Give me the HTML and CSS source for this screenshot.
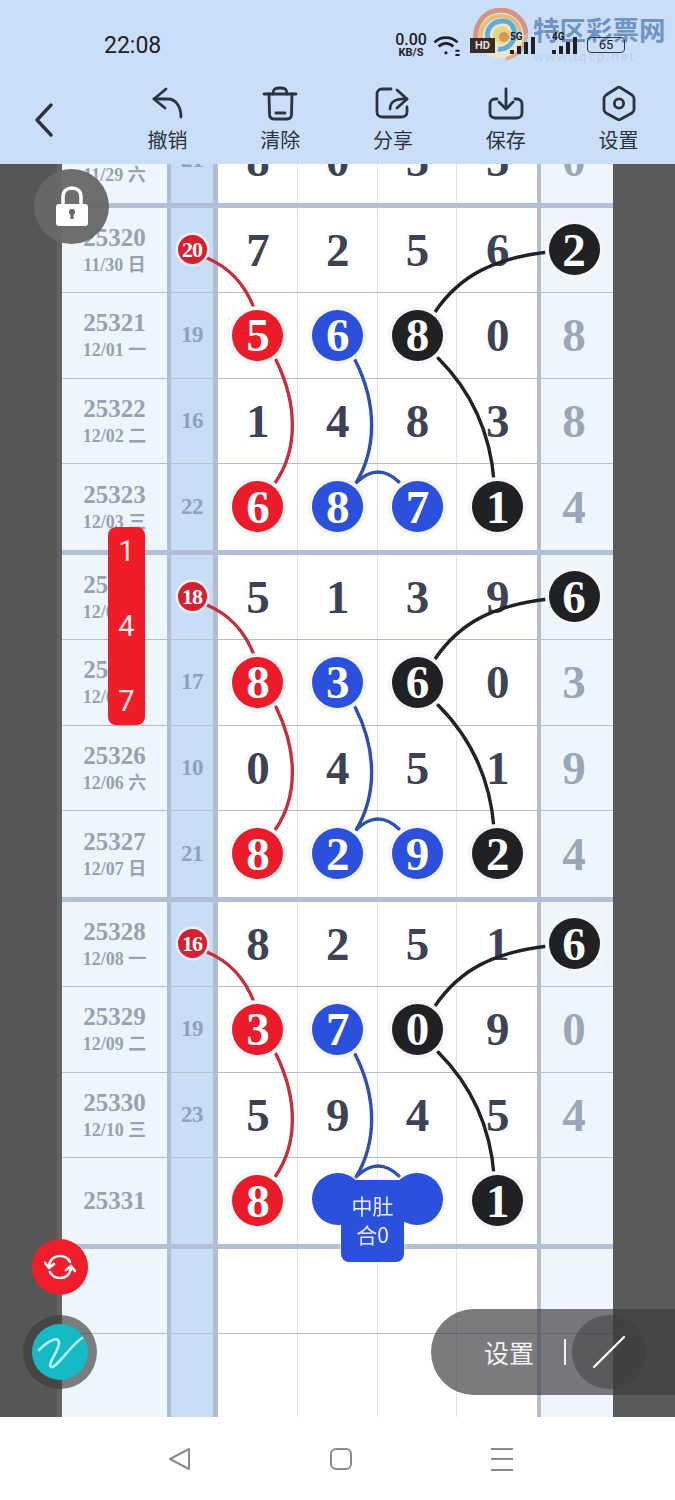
FILE: index.html

```html
<!DOCTYPE html>
<html lang="zh-CN">
<head>
    <meta charset="UTF-8">
    <meta name="viewport" content="width=device-width, initial-scale=1.0">
    <title>走势图</title>
    <link rel="stylesheet" href="styles.css">
</head>
<body>
    <header class="top">
        <div class="status-bar">
            <span class="time">22:08</span>
            <div class="status-icons">
                <div class="speed"><span>0.00</span><small>KB/S</small></div>
                <svg class="wifi" width="28" height="21" viewBox="0 0 26 20" fill="none" stroke="#1d2026" stroke-width="2.6">
                    <path d="M1 7 C7 1 17 1 23 7"/>
                    <path d="M5 11 C9 7 15 7 19 11"/>
                    <circle cx="12" cy="17" r="1.6" fill="#1d2026" stroke="none"/>
                    <path d="M21 15 h4 M21 19 h4" stroke-width="2"/>
                </svg>
                <span class="hd">HD</span>
                <div class="signal"><small>5G</small><i class="b1"></i><i class="b2"></i><i class="b3"></i><i class="b4"></i></div>
                <div class="signal"><small>4G</small><i class="b1"></i><i class="b2"></i><i class="b3"></i><i class="b4"></i></div>
                <span class="battery">65</span>
            </div>
        </div>
        <nav class="toolbar">
            <svg class="back" width="20" height="34" viewBox="0 0 20 34" fill="none" stroke="#2b3340" stroke-width="3.4" stroke-linecap="round" stroke-linejoin="round">
                <path d="M17 2 L3 17 L17 32"/>
            </svg>
            <div class="tool">
                <svg width="36" height="36" viewBox="0 0 36 36" fill="none" stroke="#2b3340" stroke-width="2.8" stroke-linecap="round" stroke-linejoin="round">
                    <path d="M17 3 L5 13 L16 22"/>
                    <path d="M5 13 H19 C27 13 32 21 32 31"/>
                </svg>
                <span>撤销</span>
            </div>
            <div class="tool">
                <svg width="36" height="36" viewBox="0 0 36 36" fill="none" stroke="#2b3340" stroke-width="2.8" stroke-linecap="round" stroke-linejoin="round">
                    <path d="M2 8 H34"/>
                    <path d="M11 8 C11 3 13 2 18 2 C23 2 25 3 25 8"/>
                    <path d="M7 8 L7.5 28 C7.5 31 9 33 12 33 H25 C28 33 29.5 31 29.5 28 L30 8"/>
                    <path d="M14 27 H23"/>
                </svg>
                <span>清除</span>
            </div>
            <div class="tool">
                <svg width="36" height="36" viewBox="0 0 36 36" fill="none" stroke="#2b3340" stroke-width="2.8" stroke-linecap="round" stroke-linejoin="round">
                    <path d="M16 3 H7 C4 3 2 5 2 8 V26 C2 29 4 31 7 31 H27 C30 31 32 29 32 26 V21"/>
                    <path d="M22 4 L32 13 L22 22"/>
                    <path d="M32 13 C22 12 15 15 15 23"/>
                </svg>
                <span>分享</span>
            </div>
            <div class="tool">
                <svg width="36" height="36" viewBox="0 0 36 36" fill="none" stroke="#2b3340" stroke-width="2.8" stroke-linecap="round" stroke-linejoin="round">
                    <path d="M9 13 H7 C4 13 2 15 2 18 V27 C2 30 4 32 7 32 H29 C32 32 34 30 34 27 V18 C34 15 32 13 29 13 H27"/>
                    <path d="M18 3 V22"/>
                    <path d="M11 16 L18 23 L25 16"/>
                </svg>
                <span>保存</span>
            </div>
            <div class="tool">
                <svg width="36" height="36" viewBox="0 0 36 36" fill="none" stroke="#2b3340" stroke-width="2.8" stroke-linecap="round" stroke-linejoin="round">
                    <path d="M16 2 C17 1 19 1 20 2 L31 9 C32 10 33 11 33 12 V24 C33 25 32 26 31 27 L20 33 C19 34 17 34 16 33 L5 27 C4 26 3 25 3 24 V12 C3 11 4 10 5 9 Z"/>
                    <circle cx="18" cy="17.5" r="4.6"/>
                </svg>
                <span>设置</span>
            </div>
        </nav>
    </header>

    <main class="board">
        <div class="gutter gutter-left"></div>
        <div class="sheet">
            <div class="row row-end">
                <div class="date"><b>25319</b><span>11/29 六</span></div>
                <div class="sum">21</div>
                <div class="cell">8</div><div class="cell">0</div><div class="cell">5</div><div class="cell">5</div>
                <div class="last">0</div>
            </div>

            <div class="row">
                <div class="date"><b>25320</b><span>11/30 日</span></div>
                <div class="sum"><span class="tag">20</span></div>
                <div class="cell">7</div><div class="cell">2</div><div class="cell">5</div><div class="cell">6</div>
                <div class="last"><span class="ball black">2</span></div>
            </div>
            <div class="row">
                <div class="date"><b>25321</b><span>12/01 一</span></div>
                <div class="sum">19</div>
                <div class="cell"><span class="ball red">5</span></div><div class="cell"><span class="ball blue">6</span></div><div class="cell"><span class="ball black">8</span></div><div class="cell">0</div>
                <div class="last">8</div>
            </div>
            <div class="row">
                <div class="date"><b>25322</b><span>12/02 二</span></div>
                <div class="sum">16</div>
                <div class="cell">1</div><div class="cell">4</div><div class="cell">8</div><div class="cell">3</div>
                <div class="last">8</div>
            </div>
            <div class="row row-end">
                <div class="date"><b>25323</b><span>12/03 三</span></div>
                <div class="sum">22</div>
                <div class="cell"><span class="ball red">6</span></div><div class="cell"><span class="ball blue">8</span></div><div class="cell"><span class="ball blue">7</span></div><div class="cell"><span class="ball black">1</span></div>
                <div class="last">4</div>
            </div>

            <div class="row">
                <div class="date"><b>25324</b><span>12/04 四</span></div>
                <div class="sum"><span class="tag">18</span></div>
                <div class="cell">5</div><div class="cell">1</div><div class="cell">3</div><div class="cell">9</div>
                <div class="last"><span class="ball black">6</span></div>
            </div>
            <div class="row">
                <div class="date"><b>25325</b><span>12/05 五</span></div>
                <div class="sum">17</div>
                <div class="cell"><span class="ball red">8</span></div><div class="cell"><span class="ball blue">3</span></div><div class="cell"><span class="ball black">6</span></div><div class="cell">0</div>
                <div class="last">3</div>
            </div>
            <div class="row">
                <div class="date"><b>25326</b><span>12/06 六</span></div>
                <div class="sum">10</div>
                <div class="cell">0</div><div class="cell">4</div><div class="cell">5</div><div class="cell">1</div>
                <div class="last">9</div>
            </div>
            <div class="row row-end">
                <div class="date"><b>25327</b><span>12/07 日</span></div>
                <div class="sum">21</div>
                <div class="cell"><span class="ball red">8</span></div><div class="cell"><span class="ball blue">2</span></div><div class="cell"><span class="ball blue">9</span></div><div class="cell"><span class="ball black">2</span></div>
                <div class="last">4</div>
            </div>

            <div class="row">
                <div class="date"><b>25328</b><span>12/08 一</span></div>
                <div class="sum"><span class="tag">16</span></div>
                <div class="cell">8</div><div class="cell">2</div><div class="cell">5</div><div class="cell">1</div>
                <div class="last"><span class="ball black">6</span></div>
            </div>
            <div class="row">
                <div class="date"><b>25329</b><span>12/09 二</span></div>
                <div class="sum">19</div>
                <div class="cell"><span class="ball red">3</span></div><div class="cell"><span class="ball blue">7</span></div><div class="cell"><span class="ball black">0</span></div><div class="cell">9</div>
                <div class="last">0</div>
            </div>
            <div class="row">
                <div class="date"><b>25330</b><span>12/10 三</span></div>
                <div class="sum">23</div>
                <div class="cell">5</div><div class="cell">9</div><div class="cell">4</div><div class="cell">5</div>
                <div class="last">4</div>
            </div>
            <div class="row row-end">
                <div class="date"><b>25331</b></div>
                <div class="sum"></div>
                <div class="cell"><span class="ball red">8</span></div><div class="cell"></div><div class="cell"></div><div class="cell"><span class="ball black">1</span></div>
                <div class="last"></div>
            </div>

            <div class="row">
                <div class="date"></div><div class="sum"></div>
                <div class="cell"></div><div class="cell"></div><div class="cell"></div><div class="cell"></div>
                <div class="last"></div>
            </div>
            <div class="row">
                <div class="date"></div><div class="sum"></div>
                <div class="cell"></div><div class="cell"></div><div class="cell"></div><div class="cell"></div>
                <div class="last"></div>
            </div>
        </div>
        <div class="gutter gutter-right"></div>

        <svg class="curves" width="675" height="1253" viewBox="0 164 675 1253" fill="none" stroke-width="3.4" stroke-linecap="round">
            <g id="trend">
                <path stroke="#c4303e" d="M207 258 Q240 272 254 308"/>
                <path stroke="#c4303e" d="M276 360 C298 405 298 450 275 483"/>
                <path stroke="#2f50b0" d="M355 360 C378 405 376 450 356 483"/>
                <path stroke="#2f50b0" d="M357 482 Q378 462 399 482"/>
                <path stroke="#1f2227" d="M548 252 C495 258 460 275 435 312"/>
                <path stroke="#1f2227" d="M438 358 C470 390 490 430 494 481"/>
            </g>
            <use href="#trend" y="347"/>
            <use href="#trend" y="694"/>
        </svg>

        <div class="blob">
            <i class="blob-dot"></i>
            <i class="blob-dot"></i>
            <i class="blob-bridge"></i>
            <div class="blob-tab">中肚<br>合0</div>
        </div>
    </main>

    <div class="lock">
        <svg width="34" height="42" viewBox="0 0 34 42">
            <path d="M8 19 V11 C8 5 12 2 17 2 C22 2 26 5 26 11 V19" fill="none" stroke="#fff" stroke-width="3.5"/>
            <rect x="1" y="18" width="32" height="22" rx="3" fill="#fff"/>
            <circle cx="17" cy="26" r="3" fill="#666"/>
            <rect x="15.5" y="27" width="3" height="6" fill="#666"/>
        </svg>
    </div>

    <div class="quick-pick">
        <span>1</span>
        <span>4</span>
        <span>7</span>
    </div>

    <div class="refresh">
        <svg width="32" height="32" viewBox="0 0 32 32" fill="none" stroke="#fff" stroke-width="2.6" stroke-linecap="round">
            <path d="M5 15 C6 8 11 5 16 5 C20 5 24 7 26 11"/>
            <path d="M27 17 C26 24 21 27 16 27 C12 27 8 25 6 21"/>
            <path d="M1 12 L5 17 L10 13" stroke-linejoin="round"/>
            <path d="M31 20 L27 15 L22 19" stroke-linejoin="round"/>
        </svg>
    </div>

    <div class="pen-ring">
        <div class="pen">
            <svg width="56" height="56" viewBox="0 0 56 56" fill="none" stroke="#b4f3f5" stroke-width="2.6" stroke-linecap="round">
                <path d="M7 26 C16 17 27 11 27 19 C27 27 15 40 19 43 C24 45 38 22 50 14"/>
            </svg>
        </div>
    </div>

    <div class="pen-bar">
        <span class="pen-label">设置</span>
        <i class="pen-rule"></i>
        <div class="pen-tool">
            <svg width="34" height="34" viewBox="0 0 34 34" fill="none" stroke="#f4f4f4" stroke-width="2.4" stroke-linecap="round">
                <path d="M2 32 L32 2"/>
            </svg>
        </div>
    </div>

    <footer class="nav-bar">
        <svg width="24" height="24" viewBox="0 0 24 24" fill="none" stroke="#8a8a8a" stroke-width="2" stroke-linejoin="round">
            <path d="M2 12 L21 2 V22 Z"/>
        </svg>
        <svg width="24" height="24" viewBox="0 0 24 24" fill="none" stroke="#8a8a8a" stroke-width="2">
            <rect x="2" y="2" width="20" height="20" rx="5"/>
        </svg>
        <svg width="24" height="24" viewBox="0 0 24 24" fill="none" stroke="#8a8a8a" stroke-width="2">
            <path d="M1 2 H23 M1 12 H23 M1 23 H23"/>
        </svg>
    </footer>

    <div class="watermark">
        <svg width="56" height="54" viewBox="0 0 56 54" fill="none">
            <ellipse cx="28" cy="27" rx="23" ry="23" fill="#f2e6c8"/>
            <path d="M6 40 C-1 22 9 3 28 2 C42 2 53 12 54 26" stroke="#d9866f" stroke-width="5"/>
            <path d="M54 26 C54 38 46 48 34 51" stroke="#e2a77e" stroke-width="4"/>
            <path d="M10 36 C5 21 15 8 29 8 C40 8 47 15 48 24" stroke="#e8b868" stroke-width="4"/>
            <path d="M17 33 C12 21 21 13 31 13 C40 13 44 21 42 30 C40 38 32 42 26 41" stroke="#4da6d6" stroke-width="5"/>
            <circle cx="30" cy="27" r="9" fill="#e9d66a"/>
            <circle cx="32" cy="29" r="5" fill="#d98a3c"/>
        </svg>
        <div class="watermark-text">
            <b>特区彩票网</b>
            <small>www.tqcp.net</small>
        </div>
    </div>
</body>
</html>
```

FILE: styles.css

```css
* {
    box-sizing: border-box;
}
body {
    margin: 0;
    width: 675px;
    height: 1500px;
    position: relative;
    overflow: hidden;
    background-color: #fff;
    font-family: "Liberation Serif", "Noto Sans CJK SC", serif;
}
.top {
    height: 164px;
    background-color: #cbdef7;
    color: #2b3340;
}
.status-bar {
    height: 78px;
    padding: 12px 50px 0 104px;
    display: flex;
    justify-content: space-between;
    align-items: center;
    font-family: Roboto, "Noto Sans", sans-serif;
    color: #1d2026;
}
.time {
    font-size: 23px;
}
.status-icons {
    position: relative;
    z-index: 5;
    display: flex;
    align-items: center;
}
.speed {
    width: 34px;
    display: flex;
    flex-direction: column;
    align-items: center;
    font-size: 16px;
    line-height: 14px;
    font-weight: 500;
}
.speed small {
    font-size: 11px;
    line-height: 11px;
    font-weight: 700;
}
.wifi {
    margin-left: 5px;
}
.hd {
    width: 25px;
    height: 15px;
    margin-left: 9px;
    background-color: #3b2a2a;
    color: #e8e0d8;
    font-size: 11px;
    line-height: 15px;
    font-weight: 700;
    text-align: center;
}
.signal {
    width: 25px;
    height: 18px;
    margin-left: 15px;
    position: relative;
    display: flex;
    align-items: flex-end;
    gap: 3px;
}
.signal + .signal {
    margin-left: 17px;
}
.signal small {
    position: absolute;
    top: -5px;
    left: 0;
    font-size: 10px;
    font-weight: 700;
}
.signal i {
    width: 4px;
    background-color: #1d2026;
}
.signal .b1 { height: 4px; }
.signal .b2 { height: 8px; }
.signal .b3 { height: 12px; }
.signal .b4 { height: 17px; }
.battery {
    width: 38px;
    height: 16px;
    margin-left: 10px;
    border: 1.5px solid #33383f;
    border-radius: 4px;
    font-size: 13px;
    line-height: 13px;
    text-align: center;
}
.toolbar {
    height: 86px;
    padding-left: 111px;
    position: relative;
    display: flex;
}
.back {
    position: absolute;
    left: 34px;
    top: 25px;
}
.tool {
    flex: 1;
    display: flex;
    flex-direction: column;
    align-items: center;
    padding-top: 8px;
}
.tool span {
    margin-top: 5px;
    font-family: "Noto Sans CJK SC", sans-serif;
    font-size: 20px;
    line-height: 26px;
}
.board {
    height: 1253px;
    position: relative;
    overflow: hidden;
    display: flex;
    align-items: flex-start;
}
.gutter {
    width: 62px;
    height: 100%;
    flex-shrink: 0;
    background-color: #565656;
}
.gutter-left {
    border-right: 5px solid #626262;
}
.gutter-right {
    background-color: #5a5a5a;
}
.sheet {
    width: 551px;
    flex-shrink: 0;
    margin-top: -47px;
}
.row {
    height: 85.5px;
    display: grid;
    grid-template-columns: 105px 51px repeat(4, 79.75px) 76px;
    border-bottom: 1px solid #b4bdca;
}
.row-end {
    height: 90.5px;
    border-bottom: 5px solid #b2bfd6;
}
.date {
    display: flex;
    flex-direction: column;
    align-items: center;
    justify-content: center;
    background-color: #eef5fd;
    color: #98a1ae;
    font-weight: 700;
}
.date b {
    font-size: 25px;
    line-height: 30px;
}
.date span {
    font-size: 18px;
    line-height: 24px;
}
.sum {
    display: flex;
    align-items: center;
    justify-content: center;
    background-color: #c9dcf5;
    border-left: 4px solid #b0bed5;
    border-right: 5px solid #b0bed5;
    color: #8fa2bc;
    font-size: 23px;
    font-weight: 700;
    letter-spacing: -0.5px;
}
.cell, .last {
    display: flex;
    align-items: center;
    justify-content: center;
    font-size: 47px;
    font-weight: 700;
    color: #3d4354;
}
.cell {
    padding-left: 1px;
    border-right: 1px solid #dfe3ea;
}
.cell:nth-child(6) {
    border-right: none;
}
.last {
    padding-right: 6px;
    background-color: #eef5fd;
    border-left: 4px solid #b0bed5;
    color: #9ba6b6;
}
.ball {
    width: 51px;
    height: 51px;
    flex-shrink: 0;
    position: relative;
    z-index: 2;
    display: flex;
    align-items: center;
    justify-content: center;
    border-radius: 50%;
    box-shadow: 0 0 0 4px #f6f6f7;
    color: #fff;
}
.red {
    background-color: #ea1c2a;
}
.blue {
    background-color: #2b50dc;
}
.black {
    background-color: #202124;
}
.tag {
    width: 29px;
    height: 29px;
    position: relative;
    z-index: 2;
    display: flex;
    align-items: center;
    justify-content: center;
    border-radius: 50%;
    background-color: #d61f30;
    box-shadow: 0 0 0 2.5px #f6eef0;
    color: #fff;
    font-size: 22px;
    letter-spacing: -1px;
}
.curves {
    position: absolute;
    left: 0;
    top: 0;
    z-index: 1;
}
.blob {
    position: absolute;
    left: 312px;
    top: 1009px;
    z-index: 2;
    width: 131px;
    height: 89px;
    display: flex;
    justify-content: space-between;
    filter: drop-shadow(0 0 2px #f3f4f6);
    font-family: "Noto Sans CJK SC", sans-serif;
}
.blob-dot {
    width: 52px;
    height: 52px;
    border-radius: 50%;
    background-color: #2b50dc;
}
.blob-bridge {
    position: absolute;
    left: 26px;
    top: 7px;
    width: 79px;
    height: 42px;
    background-color: #2b50dc;
}
.blob-tab {
    position: absolute;
    left: 29px;
    top: 7px;
    width: 63px;
    height: 82px;
    padding-top: 11px;
    border-radius: 0 0 8px 8px;
    background-color: #2b50dc;
    color: #e8eeff;
    font-size: 21px;
    line-height: 29px;
    text-align: center;
}
.lock {
    position: absolute;
    left: 34px;
    top: 169px;
    z-index: 3;
    width: 75px;
    height: 75px;
    display: flex;
    align-items: center;
    justify-content: center;
    border-radius: 50%;
    background-color: rgba(104, 104, 104, 0.96);
}
.quick-pick {
    position: absolute;
    left: 108px;
    top: 527px;
    z-index: 3;
    width: 37px;
    height: 198px;
    padding: 7px 0;
    display: flex;
    flex-direction: column;
    justify-content: space-between;
    align-items: center;
    border-radius: 8px;
    background-color: #f01c28;
    color: #ffe8e8;
    font-family: Roboto, sans-serif;
    font-size: 29px;
}
.refresh {
    position: absolute;
    left: 32px;
    top: 1239px;
    z-index: 3;
    width: 56px;
    height: 56px;
    display: flex;
    align-items: center;
    justify-content: center;
    border-radius: 50%;
    background-color: #f01e2a;
}
.pen-ring {
    position: absolute;
    left: 23px;
    top: 1315px;
    z-index: 3;
    width: 74px;
    height: 74px;
    display: flex;
    align-items: center;
    justify-content: center;
    border-radius: 50%;
    background-color: rgba(60, 60, 60, 0.65);
}
.pen {
    width: 56px;
    height: 56px;
    border-radius: 50%;
    background-color: #17b9c4;
}
.pen-bar {
    position: absolute;
    left: 431px;
    top: 1309px;
    z-index: 3;
    width: 244px;
    height: 86px;
    padding-left: 53px;
    display: flex;
    align-items: center;
    border-radius: 43px 0 0 43px;
    background-color: rgba(60, 60, 64, 0.68);
    font-family: "Noto Sans CJK SC", sans-serif;
}
.pen-label {
    font-size: 25px;
    color: #f2f2f2;
}
.pen-rule {
    width: 2px;
    height: 26px;
    margin-left: 30px;
    background-color: #f2f2f2;
}
.pen-tool {
    width: 74px;
    height: 74px;
    margin-left: 6px;
    display: flex;
    align-items: center;
    justify-content: center;
    border-radius: 50%;
    background-color: rgba(60, 60, 60, 0.5);
}
.nav-bar {
    height: 83px;
    padding-left: 6px;
    display: flex;
    justify-content: center;
    align-items: center;
    gap: 137px;
}
.watermark {
    position: absolute;
    left: 472px;
    top: 8px;
    z-index: 4;
    display: flex;
    gap: 5px;
}
.watermark > svg {
    opacity: 0.85;
}
.watermark-text {
    width: 140px;
    padding-top: 5px;
    font-family: "Noto Sans CJK SC", sans-serif;
    color: rgba(95, 135, 185, 0.85);
}
.watermark-text b {
    display: block;
    font-size: 26.5px;
    line-height: 32px;
}
.watermark-text small {
    display: block;
    margin-top: 1px;
    font-size: 13px;
    letter-spacing: 1.5px;
    color: rgba(150, 170, 200, 0.35);
}
```
